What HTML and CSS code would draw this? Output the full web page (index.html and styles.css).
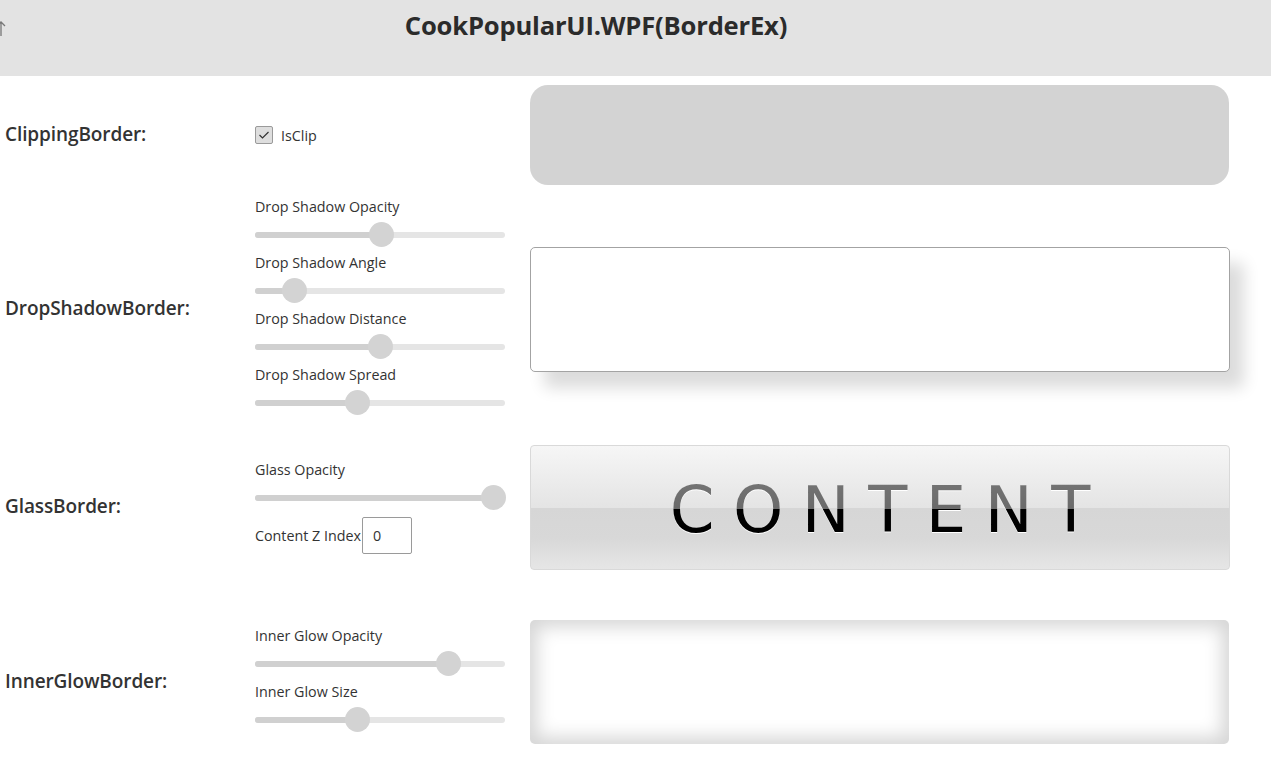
FILE: index.html
```html
<!DOCTYPE html>
<html>
<head>
<meta charset="utf-8">
<link rel="stylesheet" href="styles.css">
</head>
<body>
<header class="header">
  <svg class="back" width="8" height="16" viewBox="0 0 8 16"><path d="M-3 5 L1 1 L5 5 M1 1 L1 15" fill="none" stroke="#777" stroke-width="1.3"/></svg>
  <h1 class="title">CookPopularUI.WPF(BorderEx)</h1>
</header>
<main class="grid">
  <div class="row-label r1">ClippingBorder:</div>
  <div class="controls r1">
    <label class="check"><span class="box"><svg width="12" height="10" viewBox="0 0 12 10"><path d="M1.5 5 L4.5 8 L10.5 2" fill="none" stroke="#333" stroke-width="1.2"/></svg></span>IsClip</label>
  </div>
  <div class="demo r1"><div class="clip-box"></div></div>

  <div class="row-label r2">DropShadowBorder:</div>
  <div class="controls r2">
    <div class="slider-group">
      <div class="slider"><div class="s-label">Drop Shadow Opacity</div><div class="s-track-area"><div class="track"><div class="fill" style="width:126px"></div></div><div class="thumb" style="left:114px"></div></div></div>
      <div class="slider"><div class="s-label">Drop Shadow Angle</div><div class="s-track-area"><div class="track"><div class="fill" style="width:39px"></div></div><div class="thumb" style="left:27px"></div></div></div>
      <div class="slider"><div class="s-label">Drop Shadow Distance</div><div class="s-track-area"><div class="track"><div class="fill" style="width:125px"></div></div><div class="thumb" style="left:113px"></div></div></div>
      <div class="slider"><div class="s-label">Drop Shadow Spread</div><div class="s-track-area"><div class="track"><div class="fill" style="width:102px"></div></div><div class="thumb" style="left:90px"></div></div></div>
    </div>
  </div>
  <div class="demo r2"><div class="shadow-box"></div></div>

  <div class="row-label r3">GlassBorder:</div>
  <div class="controls r3">
    <div class="slider-group">
      <div class="slider"><div class="s-label">Glass Opacity</div><div class="s-track-area"><div class="track"><div class="fill" style="width:238px"></div></div><div class="thumb" style="left:226px"></div></div></div>
      <div class="zindex"><span>Content Z Index</span><input class="num" type="text" value="0"></div>
    </div>
  </div>
  <div class="demo r3"><div class="glass-box"><span class="glass-text">CONTENT</span></div></div>

  <div class="row-label r4">InnerGlowBorder:</div>
  <div class="controls r4">
    <div class="slider-group">
      <div class="slider"><div class="s-label">Inner Glow Opacity</div><div class="s-track-area"><div class="track"><div class="fill" style="width:193px"></div></div><div class="thumb" style="left:181px"></div></div></div>
      <div class="slider"><div class="s-label">Inner Glow Size</div><div class="s-track-area"><div class="track"><div class="fill" style="width:102px"></div></div><div class="thumb" style="left:90px"></div></div></div>
    </div>
  </div>
  <div class="demo r4"><div class="glow-box"></div></div>
</main>
</body>
</html>
```
FILE: styles.css
```css
html, body {
  margin: 0;
  padding: 0;
  background: #fff;
  overflow: hidden;
  height: 769px;
  font-family: "Open Sans", "Noto Sans", sans-serif;
  color: #333;
}
.header {
  height: 76px;
  background: #e3e3e3;
  position: relative;
  display: flex;
  justify-content: center;
  padding-right: 79px;
}
.back {
  position: absolute;
  left: 0;
  top: 21px;
}
.title {
  margin: 0;
  font-size: 25.6px;
  font-weight: 700;
  color: #2b2b2b;
  line-height: 26px;
  padding-top: 13px;
  letter-spacing: -0.2px;
}
.grid {
  display: grid;
  grid-template-columns: 250px 275px 700px;
  grid-template-rows: 109px 240px 156px 194px;
  padding-left: 5px;
  padding-top: 4px;
  align-items: center;
}
.row-label {
  font-size: 19px;
  font-weight: 600;
  color: #333;
  letter-spacing: -0.1px;
  margin-top: -2px;
}
.controls {
  font-size: 14.3px;
}
.check {
  display: flex;
  align-items: center;
  gap: 8px;
  color: #333;
  margin-top: 1px;
}
.box {
  width: 16px;
  height: 16px;
  border: 1px solid #9a9a9a;
  background: #dedede;
  border-radius: 2px;
  display: flex;
  align-items: center;
  justify-content: center;
}
.slider-group {
  display: flex;
  flex-direction: column;
  width: 250px;
}
.s-label {
  height: 20px;
  line-height: 20px;
  font-size: 14.3px;
  color: #333;
}
.s-track-area {
  height: 36px;
  position: relative;
  display: flex;
  align-items: center;
}
.track {
  width: 250px;
  height: 6px;
  border-radius: 3px;
  background: #e5e5e5;
  overflow: hidden;
}
.fill {
  height: 100%;
  background: #d0d0d0;
}
.thumb {
  position: absolute;
  top: 5px;
  width: 25px;
  height: 25px;
  border-radius: 50%;
  background: #d3d3d3;
}
.zindex {
  display: flex;
  align-items: center;
  height: 38px;
  margin-top: 1px;
  font-size: 14.3px;
}
.num {
  width: 50px;
  height: 37px;
  box-sizing: border-box;
  border: 1px solid #9a9a9a;
  border-radius: 2px;
  padding: 0 0 0 10px;
  margin-left: 1px;
  font-family: "Open Sans", sans-serif;
  font-size: 14.3px;
  color: #333;
  outline: none;
}
.demo {
  display: flex;
}
.clip-box {
  width: 699px;
  height: 100px;
  background: #d3d3d3;
  border-radius: 18px;
}
.shadow-box {
  width: 698px;
  height: 123px;
  border: 1px solid #a3a3a3;
  border-radius: 5px;
  background: #fff;
  box-shadow: 14px 16px 16px rgba(0, 0, 0, 0.14);
}
.glass-box {
  width: 698px;
  height: 123px;
  border: 1px solid #d9d9d9;
  border-radius: 4px;
  background: linear-gradient(180deg, #f6f6f6 0%, #e4e4e4 50%, #d6d6d6 50.5%, #d8d8d8 75%, #e6e6e6 100%);
  display: flex;
  align-items: center;
  justify-content: center;
}
.glass-text {
  font-family: "DejaVu Sans", sans-serif;
  font-size: 64px;
  font-weight: 400;
  letter-spacing: 18.5px;
  margin-right: -18.5px;
  padding-top: 6px;
  line-height: 80px;
  background: linear-gradient(180deg, #7a7a7a 0%, #6a6a6a 52%, #000 52%, #000 100%);
  -webkit-background-clip: text;
  background-clip: text;
  color: transparent;
  filter: drop-shadow(0 1.5px 0 #fff);
}
.glow-box {
  width: 699px;
  height: 124px;
  border-radius: 5px;
  background: #fff;
  box-shadow: inset 0 0 18px 7px #d6d6d6;
}
```
